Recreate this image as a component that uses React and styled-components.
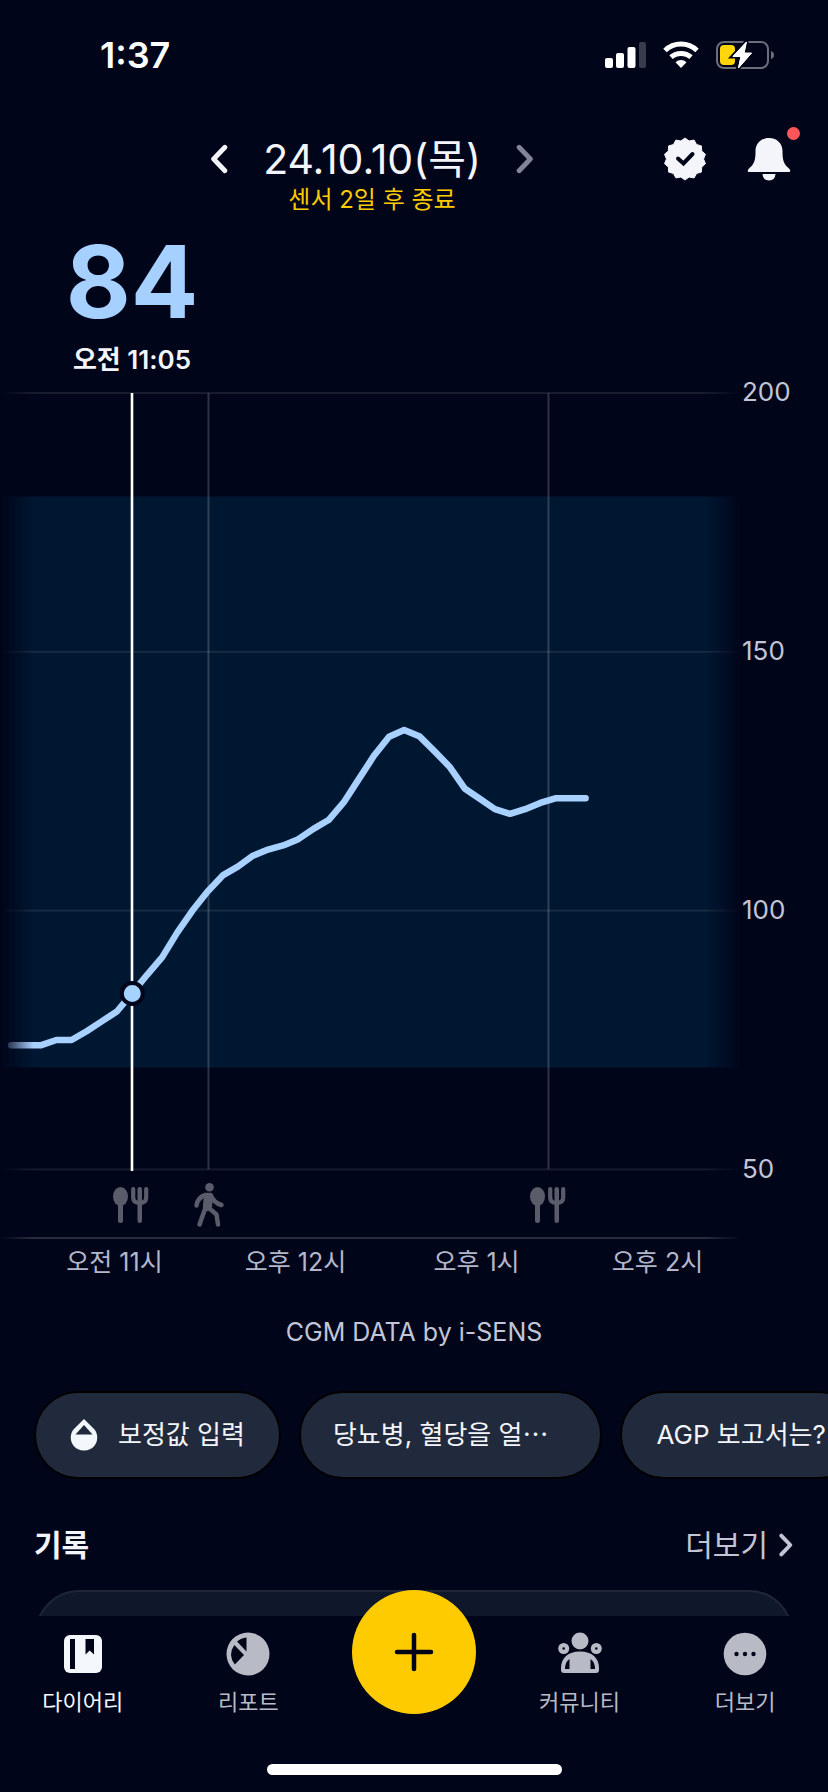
import React from "react";
import styled, { createGlobalStyle, css } from "styled-components";

const GlobalStyle = createGlobalStyle`
  * {
    box-sizing: border-box;
  }

  body {
    margin: 0;
    background: #00051a;
    color: #f4f5fa;
    font-family: Inter, "Noto Sans CJK KR", sans-serif;
  }

  button {
    padding: 0;
    border: 0;
    background: none;
    color: inherit;
    font: inherit;
    cursor: pointer;
  }

  svg {
    display: block;
  }
`;

const Page = styled.div`
  display: flex;
  flex-direction: column;
  height: 100vh;
  overflow: hidden;
`;

const Content = styled.main`
  flex: 1;
  min-height: 0;
  overflow: hidden;
`;

const StatusBar = styled.div`
  display: flex;
  justify-content: space-between;
  align-items: center;
  height: 110px;
  padding: 0 53px 0 100px;
  color: #fff;
`;

const Clock = styled.span`
  font-size: 36px;
  font-weight: 600;
  line-height: 40px;
`;

const StatusIcons = styled.div`
  display: flex;
  align-items: center;
  gap: 16px;
`;

const Header = styled.header`
  display: flex;
  justify-content: space-between;
  align-items: flex-start;
  margin-top: 25px;
  padding: 0 37px 0 208px;
`;

const DateNav = styled.div`
  width: 328px;
`;

const DateRow = styled.div`
  display: flex;
  justify-content: space-between;
  align-items: center;
`;

const DateTitle = styled.h1`
  margin: 0;
  font-size: 41px;
  font-weight: 400;
  line-height: 48px;
`;

const SensorNote = styled.p`
  margin: 0;
  color: #fdcb00;
  font-size: 24px;
  line-height: 34px;
  text-align: center;
`;

const HeaderActions = styled.div`
  display: flex;
  gap: 40px;
  padding-top: 2px;
`;

const IconButton = styled.button`
  position: relative;
  display: block;
`;

const DimButton = styled(IconButton)`
  color: #82849a;
`;

const AlertDot = styled.span`
  position: absolute;
  top: -10px;
  right: -9px;
  width: 13px;
  height: 13px;
  border-radius: 50%;
  background: #ff5757;
`;

const Reading = styled.section`
  width: 264px;
  padding-top: 15px;
  text-align: center;
`;

const ReadingValue = styled.div`
  color: #a5d0ff;
  font-size: 100px;
  font-weight: 700;
  line-height: 100px;
`;

const ReadingTime = styled.div`
  margin: 12px 0;
  font-size: 26px;
  font-weight: 600;
  line-height: 32px;
`;

const ChartArea = styled.section`
  display: grid;
  grid-template-columns: 1fr 86px;
`;

const ScaleLabels = styled.div`
  display: flex;
  flex-direction: column;
  justify-content: space-between;
  margin: -12px 0 55px;
  color: #c3c5d6;
  font-size: 26px;
  line-height: 32px;
`;

const HourLabels = styled.div`
  display: grid;
  grid-template-columns: repeat(4, 1fr);
  margin: 6px 80px 0 24px;
  color: #b4b7ca;
  font-size: 25px;
  line-height: 32px;
  text-align: center;
`;

const Credit = styled.p`
  margin: 38px 0 0;
  color: #c3c5d6;
  font-size: 25px;
  line-height: 32px;
  text-align: center;
`;

const Chips = styled.div`
  display: flex;
  gap: 18px;
  margin-top: 43px;
  padding-left: 34px;
  overflow: hidden;
`;

const Chip = styled.button`
  display: flex;
  flex: none;
  align-items: center;
  gap: 20px;
  height: 88px;
  padding: 0 34px;
  border: 2px solid #000;
  border-radius: 44px;
  background: #212a3c;
  font-size: 26px;
  line-height: 32px;
  white-space: nowrap;

  ${({ $wide }) =>
    $wide &&
    css`
      padding: 0 52px 0 32px;
    `}
`;

const SectionHead = styled.div`
  display: flex;
  justify-content: space-between;
  align-items: center;
  margin-top: 46px;
  padding: 0 34px;
`;

const SectionTitle = styled.h2`
  margin: 0;
  font-size: 30px;
  font-weight: 700;
  line-height: 40px;
`;

const MoreButton = styled.button`
  display: flex;
  align-items: center;
  gap: 10px;
  color: #c3c5d6;
  font-size: 30px;
  line-height: 40px;
`;

const RecordCard = styled.div`
  height: 120px;
  margin: 25px 35px 0;
  border: 2px solid #1e2738;
  border-radius: 44px;
  background: #0f172a;
`;

const BottomNav = styled.nav`
  position: relative;
  flex: none;
  height: 176px;
  background: #00051a;
`;

const Tabs = styled.div`
  display: grid;
  grid-template-columns: repeat(5, 1fr);
  justify-items: center;
  height: 148px;
`;

const Tab = styled.button`
  display: flex;
  flex-direction: column;
  align-items: center;
  align-self: start;
  gap: 12px;
  padding-top: 16px;
  color: ${({ $active }) => ($active ? "#f4f8fc" : "#b8bac5")};
  font-size: 22px;
  line-height: 28px;
`;

const AddButton = styled.button`
  display: flex;
  align-items: center;
  justify-content: center;
  width: 124px;
  height: 124px;
  margin-top: -26px;
  border-radius: 50%;
  background: #fecb00;
`;

const HomeIndicator = styled.div`
  width: 295px;
  height: 11px;
  margin: 0 auto;
  border-radius: 6px;
  background: #fff;
`;

// one reading every five minutes, the first one at 10:25
const readings = [
  74, 74, 74, 75, 75, 76.7, 78.6, 80.5, 84, 87.6, 91, 95.8, 100, 103.7, 106.8,
  108.5, 110.6, 111.8, 112.6, 113.8, 115.8, 117.5, 120.9, 125.4, 129.9, 133.6,
  134.9, 133.7, 130.8, 127.8, 123.6, 121.6, 119.6, 118.7, 119.6, 120.8, 121.7,
  121.7, 121.7,
];

const SELECTED = 8;
const xOf = (index) => 132 + (index - SELECTED) * 15.12;
const yOf = (value) => 5 + (200 - value) * 5.176;

const hours = ["오전 11시", "오후 12시", "오후 1시", "오후 2시"];
const levels = [200, 150, 100, 50];

const MealMark = ({ x }) => (
  <g transform={`translate(${x} 799)`} fill="#5a5c69">
    <ellipse cx="7.500" cy="9.500" rx="7.500" ry="9.500" />
    <rect x="5" y="14" width="5" height="22" rx="2.500" />
    <rect x="24.500" y="0" width="4.500" height="36" rx="2.200" />
    <path
      d="M20.200 2V10.500Q20.200 16 26.700 16Q33.200 16 33.200 10.500V2"
      fill="none"
      stroke="#5a5c69"
      strokeWidth="4.200"
      strokeLinecap="round"
    />
  </g>
);

const WalkMark = ({ x }) => (
  <g
    transform={`translate(${x} 795)`}
    fill="none"
    stroke="#5a5c69"
    strokeWidth="4.500"
    strokeLinecap="round"
    strokeLinejoin="round"
  >
    <circle cx="15.500" cy="4.300" r="4.300" fill="#5a5c69" stroke="none" />
    <path d="M2.500 22.500Q3.500 14.500 11.500 12L16.500 12Q20 20 27.500 22" />
    <path d="M12 13L11 26L5.500 41.500M17 13L15.500 25.500L22.500 31.500L24 41.500" />
    <path d="M12 13H17L15.500 26L11 27Z" fill="#5a5c69" strokeWidth="3" />
  </g>
);

const GlucoseChart = () => {
  const points = readings.map((v, i) => `${xOf(i)},${yOf(v)}`).join(" ");

  return (
    <svg viewBox="0 0 742 852" width="100%" role="img" aria-label="CGM">
      <defs>
        <linearGradient id="edge" x1="0" x2="742" gradientUnits="userSpaceOnUse">
          <stop offset="0" stopColor="#000" />
          <stop offset="0.045" stopColor="#fff" />
          <stop offset="0.95" stopColor="#fff" />
          <stop offset="1" stopColor="#000" />
        </linearGradient>
        <mask id="fade" maskUnits="userSpaceOnUse" x="0" y="0" width="742" height="852">
          <rect width="742" height="852" fill="url(#edge)" />
        </mask>
      </defs>
      <g mask="url(#fade)">
        <rect y="108.500" width="742" height="571" fill="#001731" />
        {levels.map((level) => (
          <rect
            key={level}
            y={yOf(level) - 1}
            width="742"
            height="2"
            fill="#fff"
            fillOpacity="0.09"
          />
        ))}
        <rect y="849" width="742" height="2" fill="#fff" fillOpacity="0.16" />
        <rect x="207.500" y="5" width="2" height="776" fill="#fff" fillOpacity="0.18" />
        <rect x="547.500" y="5" width="2" height="776" fill="#fff" fillOpacity="0.18" />
        <rect x="130.700" y="5" width="2.600" height="778" fill="#fff" />
        <polyline
          points={points}
          fill="none"
          stroke="#a8d1ff"
          strokeWidth="6.500"
          strokeLinecap="round"
          strokeLinejoin="round"
        />
      </g>
      <circle
        cx="132.300"
        cy={yOf(readings[SELECTED])}
        r="10.500"
        fill="#a5d2ff"
        stroke="#00051a"
        strokeWidth="4"
      />
      <MealMark x={113} />
      <WalkMark x={194} />
      <MealMark x={530} />
    </svg>
  );
};

const Signal = () => (
  <svg width="42" height="28" viewBox="0 0 42 28" fill="#fff">
    <rect x="0" y="17" width="8" height="10" rx="2" />
    <rect x="11" y="12" width="8" height="15" rx="2" />
    <rect x="22.500" y="6" width="8" height="21" rx="2" />
    <rect x="34" y="1" width="7" height="26" rx="2" opacity="0.22" />
  </svg>
);

const Wifi = () => (
  <svg width="36" height="28" viewBox="0 0 36 28" fill="none" stroke="#fff" strokeWidth="5">
    <path d="M2 9.500A23 23 0 0 1 34 9.500" />
    <path d="M8 16.200A15 15 0 0 1 28 16.200" />
    <path d="M18 27L12.500 21.300A8 8 0 0 1 23.500 21.300Z" fill="#fff" stroke="none" />
  </svg>
);

const Battery = () => (
  <svg width="60" height="30" viewBox="0 0 60 30">
    <rect x="2" y="2" width="51" height="26" rx="7" fill="none" stroke="#6c6e7c" strokeWidth="2" />
    <path d="M56 11Q59 12 59 15Q59 18 56 19Z" fill="#6c6e7c" />
    <rect x="5" y="5" width="15" height="20" rx="4" fill="#ffd60a" />
    <path
      d="M31.500 1.500L17.500 16.500H25.500L23 28.500L37 13H29.500Z"
      fill="#fff"
      stroke="#00051a"
      strokeWidth="4"
      paintOrder="stroke"
    />
    <path d="M31.500 2L18 16.500H26L23.500 28L36.500 13H29Z" fill="#fff" stroke="#fff" strokeLinejoin="round" />
  </svg>
);

const Chevron = ({ width, height, left }) => (
  <svg
    width={width}
    height={height}
    viewBox="0 0 16 28"
    fill="none"
    stroke="currentColor"
    strokeWidth="4.500"
    strokeLinecap="round"
    strokeLinejoin="round"
  >
    <path d={left ? "M13.500 3L3 14L13.500 25" : "M2.500 3L13 14L2.500 25"} />
  </svg>
);

// fourteen points of the seal, with shallow dips between them
const sealPoints = Array.from({ length: 28 }, (_, i) => {
  const radius = i % 2 ? 18.5 : 21;
  const angle = (i * Math.PI) / 14;
  return `${22 + radius * Math.sin(angle)},${22 - radius * Math.cos(angle)}`;
}).join(" ");

const Seal = () => (
  <svg width="44" height="44" viewBox="0 0 44 44">
    <polygon
      points={sealPoints}
      fill="#f4f5fa"
      stroke="#f4f5fa"
      strokeLinejoin="round"
    />
    <path
      d="M15 21.500L20.500 26.500L29.500 17"
      fill="none"
      stroke="#00051a"
      strokeWidth="4"
      strokeLinecap="round"
    />
  </svg>
);

const Bell = () => (
  <svg width="44" height="44" viewBox="0 0 44 44" fill="#f4f5fa">
    <path d="M22 1C13.500 1 8.500 7 8.500 14C8.500 23 7.500 27 2 31.500C0 33.500 .5 35 2.500 35H41.500C43.500 35 44 33.500 42 31.500C36.500 27 35.500 23 35.500 14C35.500 7 30.500 1 22 1Z" />
    <path d="M15.500 37H28.500Q28 43.500 22 43.500Q16 43.500 15.500 37Z" />
  </svg>
);

const Drop = () => (
  <svg width="28" height="32" viewBox="0 0 28 32">
    <path
      d="M14 0L24.500 10.500C30 17 27.500 31.500 14 31.500C.5 31.500 -2 17 3.500 10.500Z"
      fill="#f4f8fc"
    />
    <path d="M14 6L5.500 15.500H22.500Z" fill="#212a3c" />
  </svg>
);

const DiaryIcon = () => (
  <svg width="44" height="44" viewBox="0 0 44 44">
    <rect x="3" y="3" width="38" height="38" rx="6" fill="#f4f8fc" />
    <rect x="9" y="7" width="5" height="30" fill="#00051a" />
    <path d="M24.500 7H33V22.500L28.700 18.500L24.500 22.500Z" fill="#00051a" />
  </svg>
);

const ReportIcon = () => (
  <svg width="44" height="44" viewBox="0 0 44 44">
    <circle cx="22" cy="22" r="21.500" fill="#b8bac5" />
    <path d="M20.500 5.500V19.500L11 9.500Q15 6 20.500 5.500Z" fill="#00051a" />
    <path d="M8.300 13L18 23L8.800 32.500Q1.500 23 8.300 13Z" fill="#00051a" />
  </svg>
);

const CommunityIcon = () => (
  <svg width="44" height="44" viewBox="0 0 44 44" fill="#b8bac5">
    <circle cx="22" cy="9" r="8.500" />
    <circle cx="5.700" cy="16.500" r="5.500" />
    <circle cx="38.300" cy="16.500" r="5.500" />
    <circle cx="5.700" cy="16.500" r="1.300" fill="#00051a" />
    <circle cx="38.300" cy="16.500" r="1.300" fill="#00051a" />
    <path d="M3 36C3 26 10 19.500 22 19.500S41 26 41 36V38Q41 41 38 41H6Q3 41 3 38Z" />
    <path d="M11.500 27V37H7Q7 30 11.500 27ZM32.500 27V37H37Q37 30 32.500 27Z" fill="#00051a" />
  </svg>
);

const MoreIcon = () => (
  <svg width="44" height="44" viewBox="0 0 44 44">
    <circle cx="22" cy="22" r="21.300" fill="#b8bac5" />
    <circle cx="13.500" cy="22" r="2.200" fill="#00051a" />
    <circle cx="22" cy="22" r="2.200" fill="#00051a" />
    <circle cx="30.500" cy="22" r="2.200" fill="#00051a" />
  </svg>
);

const Plus = () => (
  <svg width="44" height="44" viewBox="0 0 44 44">
    <path d="M22 5V39M5 22H39" stroke="#00051a" strokeWidth="4.500" strokeLinecap="round" />
  </svg>
);

const App = () => {
  return (
    <Page lang="ko">
      <GlobalStyle />
      <Content>
        <StatusBar>
          <Clock>1:37</Clock>
          <StatusIcons>
            <Signal />
            <Wifi />
            <Battery />
          </StatusIcons>
        </StatusBar>

        <Header>
          <DateNav>
            <DateRow>
              <IconButton aria-label="이전">
                <Chevron left width={22} height={30} />
              </IconButton>
              <DateTitle>24.10.10(목)</DateTitle>
              <DimButton aria-label="다음">
                <Chevron width={22} height={30} />
              </DimButton>
            </DateRow>
            <SensorNote>센서 2일 후 종료</SensorNote>
          </DateNav>
          <HeaderActions>
            <IconButton aria-label="인증">
              <Seal />
            </IconButton>
            <IconButton aria-label="알림">
              <Bell />
              <AlertDot />
            </IconButton>
          </HeaderActions>
        </Header>

        <Reading>
          <ReadingValue>84</ReadingValue>
          <ReadingTime>오전 11:05</ReadingTime>
        </Reading>

        <ChartArea>
          <GlucoseChart />
          <ScaleLabels>
            {levels.map((level) => (
              <span key={level}>{level}</span>
            ))}
          </ScaleLabels>
        </ChartArea>
        <HourLabels>
          {hours.map((hour) => (
            <span key={hour}>{hour}</span>
          ))}
        </HourLabels>
        <Credit>CGM DATA by i-SENS</Credit>

        <Chips>
          <Chip>
            <Drop />
            보정값 입력
          </Chip>
          <Chip $wide>당뇨병, 혈당을 얼⋯</Chip>
          <Chip>AGP 보고서는?</Chip>
        </Chips>

        <SectionHead>
          <SectionTitle>기록</SectionTitle>
          <MoreButton>
            더보기
            <Chevron width={16} height={24} />
          </MoreButton>
        </SectionHead>
        <RecordCard />
      </Content>

      <BottomNav>
        <Tabs>
          <Tab $active>
            <DiaryIcon />
            다이어리
          </Tab>
          <Tab>
            <ReportIcon />
            리포트
          </Tab>
          <AddButton aria-label="추가">
            <Plus />
          </AddButton>
          <Tab>
            <CommunityIcon />
            커뮤니티
          </Tab>
          <Tab>
            <MoreIcon />
            더보기
          </Tab>
        </Tabs>
        <HomeIndicator />
      </BottomNav>
    </Page>
  );
};

export default App;
